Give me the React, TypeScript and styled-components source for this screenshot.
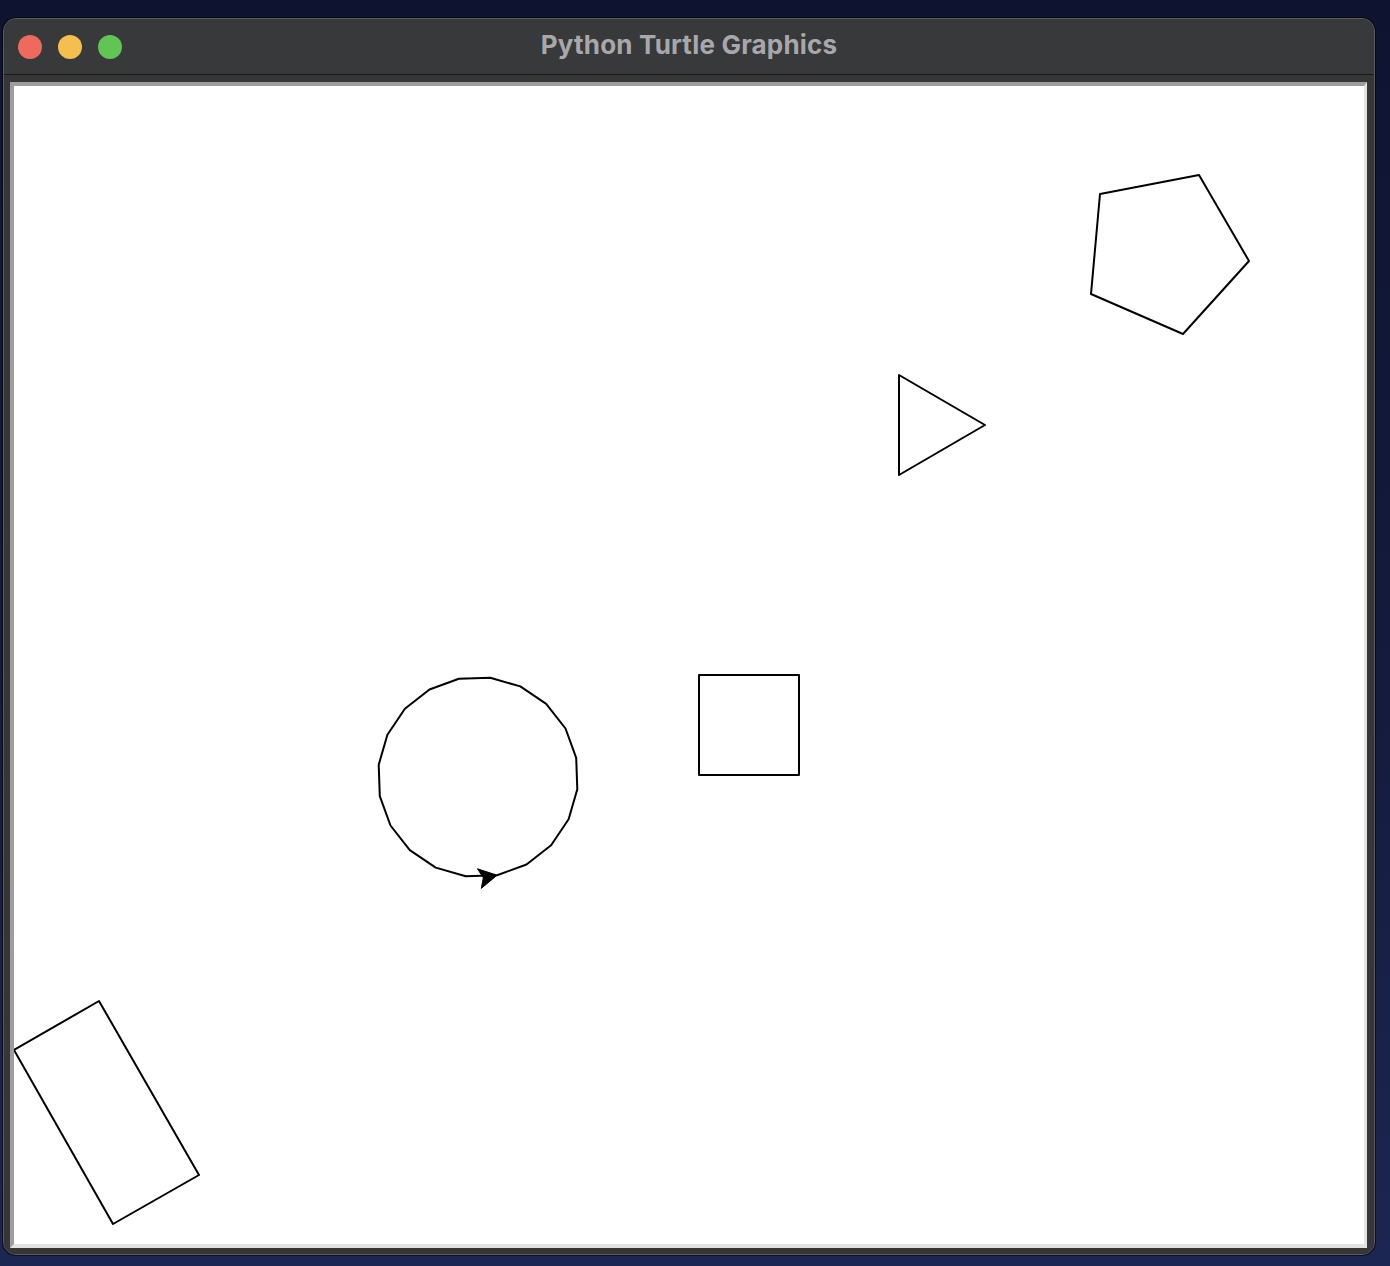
import React from "react";
import styled, { createGlobalStyle } from "styled-components";

const GlobalStyle = createGlobalStyle`
  html, body {
    margin: 0;
    padding: 0;
  }
  body {
    width: 1390px;
    height: 1266px;
    overflow: hidden;
    background: linear-gradient(180deg, #0e1430 0%, #141b3c 55%, #1c2652 100%);
    font-family: Inter, "Liberation Sans", sans-serif;
  }
`;

const Page = styled.div`
  padding: 18px 0 0 3px;
`;

const Window = styled.div`
  width: 1370px;
  height: 1235px;
  border: 1px solid #5c5c5e;
  border-radius: 13px;
  background: #363637;
  overflow: hidden;
  display: flex;
  flex-direction: column;
  box-shadow: 0 0 0 1px rgba(0, 0, 0, 0.6);
`;

const TitleBar = styled.div`
  height: 55px;
  flex: none;
  background: #38393b;
  border-bottom: 1px solid #19191a;
  display: grid;
  grid-template-columns: 1fr auto 1fr;
  align-items: center;
`;

const Lights = styled.div`
  display: flex;
  gap: 16px;
  padding-left: 14px;
`;

const Light = styled.span<{ $color: string }>`
  width: 24px;
  height: 24px;
  border-radius: 50%;
  background: ${(p) => p.$color};
`;

const Title = styled.div`
  color: #a8a8aa;
  font-family: Inter, "Liberation Sans", sans-serif;
  font-weight: 700;
  font-size: 26px;
  letter-spacing: 0.2px;
  margin-top: -4px;
`;

const Body = styled.div`
  flex: 1;
  padding: 7px 7px 6px 6px;
  background: #363636;
`;

const CanvasFrame = styled.div`
  width: 1350px;
  height: 1158px;
  border-style: solid;
  border-width: 4px 3px 4px 4px;
  border-color: #9d9d9d #e2e2e2 #e2e2e2 #9d9d9d;
  background: #ffffff;
  overflow: hidden;
`;

const Drawing = styled.svg`
  display: block;
`;

const OX = 14;
const OY = 86;

const circlePts = (() => {
  const cx = 478;
  const cy = 777;
  const r = 100;
  const pts: [number, number][] = [];
  for (let k = 0; k < 20; k++) {
    const a = ((-11 + 18 * k) * Math.PI) / 180;
    pts.push([cx + r * Math.cos(a), cy + r * Math.sin(a)]);
  }
  return pts;
})();

const toStr = (pts: [number, number][]) => pts.map((p) => `${p[0].toFixed(1)},${p[1].toFixed(1)}`).join(" ");

const turtleArrow = (() => {
  const tip: [number, number] = [circlePts[5][0], circlePts[5][1]];
  const h = (-11 * Math.PI) / 180;
  const f = [Math.cos(h), Math.sin(h)];
  const n = [-Math.sin(h), Math.cos(h)];
  const pt = (fw: number, sd: number): [number, number] => [
    tip[0] + f[0] * fw + n[0] * sd,
    tip[1] + f[1] * fw + n[1] * sd,
  ];
  return [tip, pt(-18, 10), pt(-14, 0), pt(-18, -10)] as [number, number][];
})();

export default function App() {
  return (
    <>
      <GlobalStyle />
      <Page>
        <Window>
          <TitleBar>
            <Lights>
              <Light $color="#ee6a5e" />
              <Light $color="#f5bf4f" />
              <Light $color="#61c554" />
            </Lights>
            <Title>Python Turtle Graphics</Title>
            <div />
          </TitleBar>
          <Body>
            <CanvasFrame>
              <Drawing width="1350" height="1158" viewBox="0 0 1350 1158">
                <g
                  transform={`translate(${-OX},${-OY})`}
                  fill="none"
                  stroke="#000"
                  strokeWidth="2"
                  strokeLinejoin="round"
                >
                  <polygon points="1100,194 1199,175 1249,261 1183,334 1091,294" />
                  <polygon points="899,375 985,425 899,475" />
                  <polygon points="699,675 799,675 799,775 699,775" />
                  <polygon points="14,1050 99,1001 199,1175 113,1224" />
                  <polygon points={toStr(circlePts)} />
                  <polygon points={toStr(turtleArrow)} fill="#000" stroke="#000" strokeWidth="1" />
                </g>
              </Drawing>
            </CanvasFrame>
          </Body>
        </Window>
      </Page>
    </>
  );
}
